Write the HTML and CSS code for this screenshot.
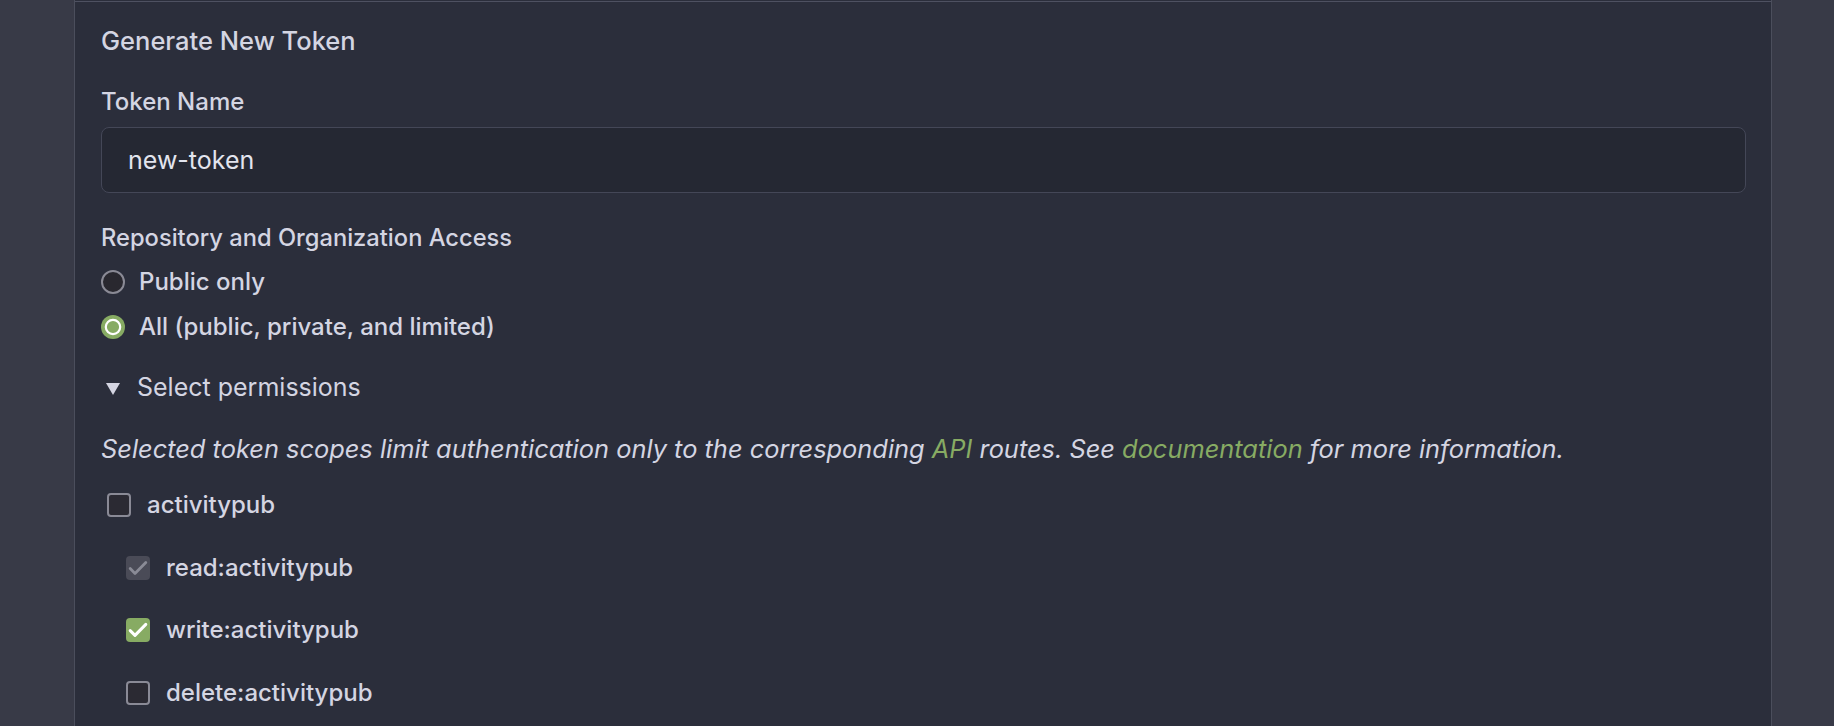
FILE: index.html
```html
<!DOCTYPE html>
<html lang="en">
<head>
<meta charset="utf-8">
<title>Generate New Token</title>
<link rel="stylesheet" href="styles.css">
</head>
<body>
<div class="page">
  <aside class="gutter gutter-left"></aside>
  <main class="card">
    <div class="card-top"></div>
    <h2 class="title">Generate New Token</h2>
    <form class="form">
      <div class="field">
        <label class="label" for="name">Token Name</label>
        <div class="input"><span class="input-text">new-token</span></div>
      </div>
      <div class="field field-access">
        <div class="label label-access">Repository and Organization Access</div>
        <div class="radio-row">
          <span class="radio"></span>
          <span class="opt">Public only</span>
        </div>
        <div class="radio-row">
          <span class="radio radio-on">
            <svg viewBox="0 0 24 24" width="24" height="24"><circle cx="12" cy="12" r="12" fill="#87ab63"/><circle cx="12" cy="12" r="7.2" fill="#87ab63" stroke="#ffffff" stroke-width="2.2"/></svg>
          </span>
          <span class="opt">All (public, private, and limited)</span>
        </div>
      </div>
      <div class="summary">
        <span class="tri"></span>
        <span class="summary-text">Select permissions</span>
      </div>
      <p class="help">Selected token scopes limit authentication only to the corresponding <a class="link">API</a> routes. See <a class="link">documentation</a> for more information.</p>
      <div class="scopes">
        <div class="check-row">
          <span class="check"></span>
          <span class="opt">activitypub</span>
        </div>
        <div class="check-row sub">
          <span class="check check-disabled">
            <svg viewBox="0 0 24 24" width="24" height="24"><path d="M4.2 12.6 L9 17.4 L19.8 6.4" fill="none" stroke="#8a8b96" stroke-width="2.8" stroke-linecap="round" stroke-linejoin="round"/></svg>
          </span>
          <span class="opt">read:activitypub</span>
        </div>
        <div class="check-row sub">
          <span class="check check-on">
            <svg viewBox="0 0 24 24" width="24" height="24"><path d="M4.2 12.6 L9 17.4 L19.8 6.4" fill="none" stroke="#ffffff" stroke-width="3" stroke-linecap="round" stroke-linejoin="round"/></svg>
          </span>
          <span class="opt">write:activitypub</span>
        </div>
        <div class="check-row sub">
          <span class="check"></span>
          <span class="opt">delete:activitypub</span>
        </div>
      </div>
    </form>
  </main>
  <aside class="gutter gutter-right"></aside>
</div>
</body>
</html>
```

FILE: styles.css
```css
* { box-sizing: border-box; }

html, body {
  margin: 0;
  padding: 0;
  height: 100%;
  background: #383a47;
  font-family: Inter, "Noto Sans", "Liberation Sans", sans-serif;
  color: #d4d5e2;
}

.page {
  display: flex;
  height: 726px;
  overflow: hidden;
}

.gutter {
  background: #383a47;
}
.gutter-left { width: 74px; flex: none; }
.gutter-right { width: 62px; flex: none; }

.card {
  flex: 1;
  background: #2b2e3b;
  border-left: 1px solid #4b4e5c;
  border-right: 1px solid #4b4e5c;
  padding: 0 25px 0 26px;
}

.card-top {
  margin: 1px -25px 0 -26px;
  height: 1px;
  background: #4e5161;
}

.title {
  margin: 24px 0 0;
  font-size: 25.5px;
  line-height: 30px;
  font-weight: 500;
}

.form { margin: 0; }

.field { margin-top: 31px; }

.label {
  display: block;
  font-size: 24px;
  line-height: 30px;
  font-weight: 500;
}

.label-access { font-size: 23.7px; }

.input {
  margin-top: 10px;
  height: 66px;
  background: #252833;
  border: 1px solid #444757;
  border-radius: 8px;
  display: flex;
  align-items: center;
  padding-left: 26px;
}

.input-text {
  font-size: 25px;
  font-weight: 400;
  color: #e2e4ee;
}

.field-access { margin-top: 30px; }

.radio-row {
  display: flex;
  align-items: center;
  height: 30px;
  margin-top: 14px;
}

.radio-row + .radio-row { margin-top: 15px; }

.radio {
  width: 24px;
  height: 24px;
  border-radius: 50%;
  border: 2.5px solid #8a8a95;
  background: #29282f;
  flex: none;
  margin-right: 14px;
}

.radio-on {
  border: 0;
  background: none;
}
.radio-on svg { display: block; }

.opt {
  font-size: 24px;
  font-weight: 500;
  line-height: 30px;
}

.summary {
  margin-top: 30px;
  display: flex;
  align-items: center;
  height: 30px;
}

.tri {
  width: 0;
  height: 0;
  border-left: 7px solid transparent;
  border-right: 7px solid transparent;
  border-top: 12px solid #d4d5e2;
  margin-left: 5px;
  margin-right: 17px;
  margin-top: 3px;
}

.summary-text {
  font-size: 25px;
  font-weight: 400;
}

.help {
  margin: 32px 0 0;
  font-size: 25.4px;
  line-height: 30px;
  font-style: italic;
}

.link {
  color: #87ab63;
  text-decoration: none;
}

.scopes { margin-top: 26px; }

.check-row {
  display: flex;
  align-items: center;
  height: 30px;
  padding-left: 6px;
}

.check-row.sub {
  padding-left: 25px;
  margin-top: 32.5px;
}

.check {
  width: 24px;
  height: 24px;
  border-radius: 4px;
  border: 2.5px solid #8a8a96;
  background: #2b2a33;
  flex: none;
  margin-right: 16px;
  position: relative;
}

.check svg {
  display: block;
  position: absolute;
  left: 0;
  top: 0;
}

.check-disabled {
  border: 0;
  background: #4a4b57;
}

.check-on {
  border: 0;
  background: #87ab63;
}
```
